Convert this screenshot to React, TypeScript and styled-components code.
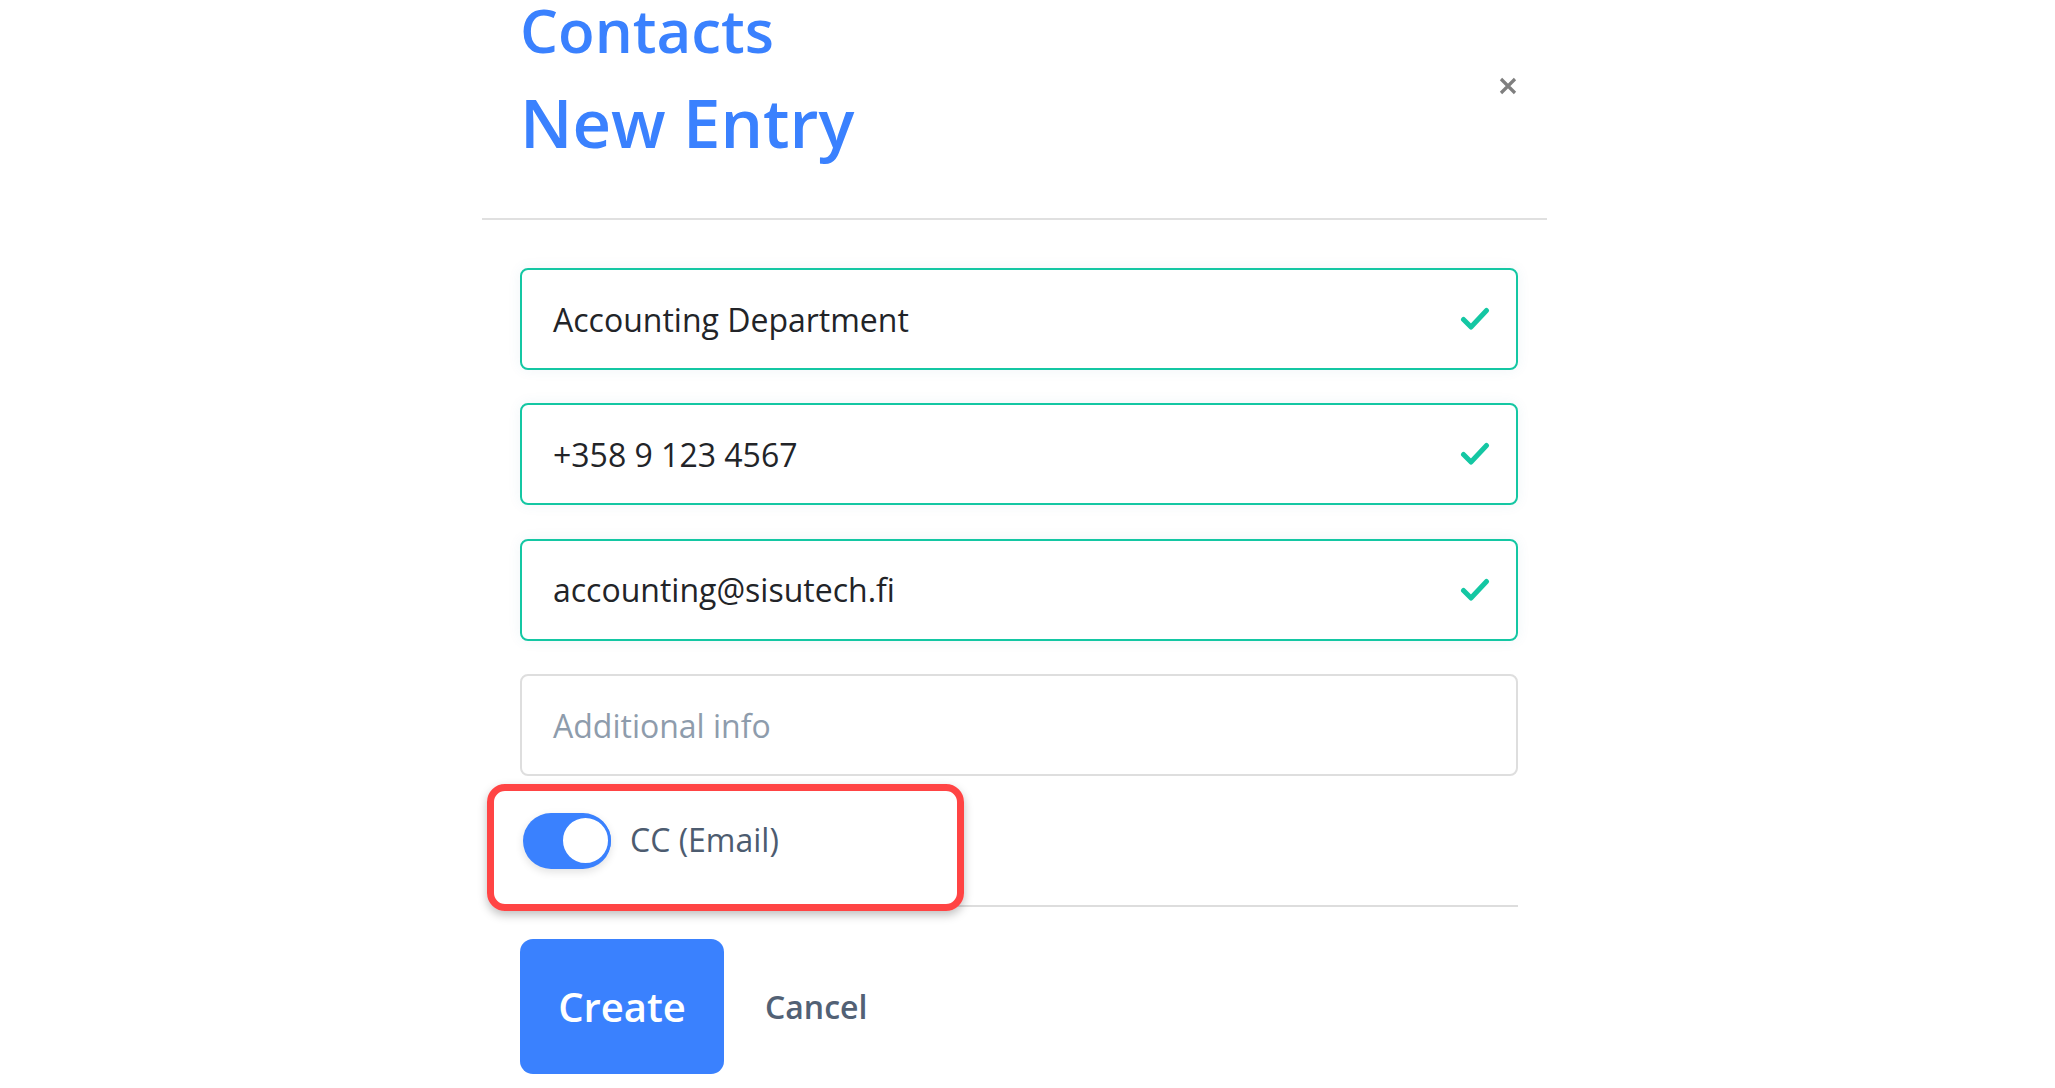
import React from "react";
import styled, { createGlobalStyle } from "styled-components";

const GlobalStyle = createGlobalStyle`
  html, body {
    margin: 0;
    padding: 0;
    background: #ffffff;
    font-family: "Open Sans", "Noto Sans", Arial, sans-serif;
  }
  * { box-sizing: border-box; }
`;

const BLUE = "#3a81fe";
const TEAL = "#14c7a3";

const Modal = styled.div`
  width: 1065px;
  margin-left: 482px;
  background: #ffffff;
`;

const Header = styled.header`
  display: flex;
  justify-content: space-between;
  align-items: flex-start;
  padding: 0 29px 62px 38px;
`;

const TitleBlock = styled.div`
  display: flex;
  flex-direction: column;
`;

const Title = styled.h1<{ $size: number; $gap?: number }>`
  margin: ${(p) => p.$gap ?? 0}px 0 0 0;
  font-size: ${(p) => p.$size}px;
  line-height: ${(p) => p.$size}px;
  font-weight: 600;
  color: ${BLUE};
  letter-spacing: 0;
`;

const CloseButton = styled.button`
  margin-top: 76px;
  width: 20px;
  height: 20px;
  padding: 0;
  border: none;
  background: transparent;
  display: flex;
  align-items: center;
  justify-content: center;
  cursor: pointer;
`;

const Rule = styled.hr<{ $color?: string }>`
  margin: 0;
  border: none;
  height: 2px;
  background: ${(p) => p.$color ?? "#e0e0e0"};
`;

const Body = styled.div`
  padding: 48px 29px 0 38px;
`;

const Fields = styled.div`
  display: flex;
  flex-direction: column;
  gap: 33.4px;
`;

const Field = styled.div<{ $valid?: boolean }>`
  height: 102px;
  display: flex;
  align-items: center;
  justify-content: space-between;
  padding: 0 26px 0 31px;
  border: 2px solid ${(p) => (p.$valid ? TEAL : "#dedede")};
  border-radius: 8px;
  background: #ffffff;
  box-shadow: ${(p) => (p.$valid ? "0 0 14px rgba(40, 120, 160, 0.07)" : "none")};
`;

const FieldText = styled.span<{ $placeholder?: boolean }>`
  font-size: 32px;
  font-weight: 400;
  color: ${(p) => (p.$placeholder ? "#8e9cac" : "#222428")};
  white-space: nowrap;
`;

const ToggleRow = styled.div`
  position: relative;
  height: 129px;
  display: flex;
  align-items: center;
  gap: 19px;
  padding-left: 3px;
`;

const Track = styled.button`
  width: 88px;
  height: 56px;
  padding: 0;
  border: none;
  border-radius: 28px;
  background: ${BLUE};
  display: flex;
  align-items: center;
  justify-content: flex-end;
  cursor: pointer;
  box-shadow: 0 3px 8px rgba(0, 0, 0, 0.12);
`;

const Knob = styled.span`
  width: 51px;
  height: 51px;
  border-radius: 50%;
  background: #ffffff;
  border: 3px solid ${BLUE};
`;

const ToggleLabel = styled.span`
  font-size: 32px;
  color: #4d5c70;
  padding-bottom: 2px;
`;

const Highlight = styled.div`
  position: absolute;
  left: -33px;
  top: 8px;
  width: 477px;
  height: 127px;
  border: 7px solid #ff4444;
  border-radius: 18px;
  box-shadow: 0 4px 10px rgba(0, 0, 0, 0.25);
  pointer-events: none;
`;

const Actions = styled.div`
  display: flex;
  align-items: center;
  gap: 41px;
  padding-top: 32px;
`;

const PrimaryButton = styled.button`
  width: 204px;
  height: 135px;
  border: none;
  border-radius: 13px;
  background: ${BLUE};
  color: #ffffff;
  font-family: "Open Sans", Arial, sans-serif;
  font-size: 40px;
  font-weight: 600;
  cursor: pointer;
`;

const LinkButton = styled.button`
  border: none;
  background: transparent;
  padding: 0;
  color: #526175;
  font-family: "Open Sans", Arial, sans-serif;
  font-size: 32px;
  font-weight: 600;
  cursor: pointer;
`;

const Check = () => (
  <svg width="30" height="26" viewBox="0 0 30 26" aria-hidden="true">
    <polyline
      points="3.5,13.5 11,21 26.5,4.5"
      fill="none"
      stroke={TEAL}
      strokeWidth="5"
      strokeLinecap="round"
      strokeLinejoin="round"
    />
  </svg>
);

const CloseIcon = () => (
  <svg width="18" height="18" viewBox="0 0 18 18" aria-hidden="true">
    <path d="M2 2 L16 16 M16 2 L2 16" stroke="#7f7f7f" strokeWidth="3.2" strokeLinecap="butt" />
  </svg>
);

const fields = [
  { text: "Accounting Department", valid: true },
  { text: "+358 9 123 4567", valid: true },
  { text: "accounting@sisutech.fi", valid: true },
  { text: "Additional info", valid: false },
];

export default function App() {
  return (
    <>
      <GlobalStyle />
      <Modal>
        <Header>
          <TitleBlock>
            <Title as="div" $size={60}>Contacts</Title>
            <Title $size={67} $gap={29}>New Entry</Title>
          </TitleBlock>
          <CloseButton aria-label="Close">
            <CloseIcon />
          </CloseButton>
        </Header>
        <Rule />
        <Body>
          <Fields>
            {fields.map((f) => (
              <Field key={f.text} $valid={f.valid}>
                <FieldText $placeholder={!f.valid}>{f.text}</FieldText>
                {f.valid && <Check />}
              </Field>
            ))}
          </Fields>
          <ToggleRow>
            <Track aria-pressed="true">
              <Knob />
            </Track>
            <ToggleLabel>CC (Email)</ToggleLabel>
            <Highlight />
          </ToggleRow>
          <Rule $color="#dddddd" />
          <Actions>
            <PrimaryButton>Create</PrimaryButton>
            <LinkButton>Cancel</LinkButton>
          </Actions>
        </Body>
      </Modal>
    </>
  );
}
